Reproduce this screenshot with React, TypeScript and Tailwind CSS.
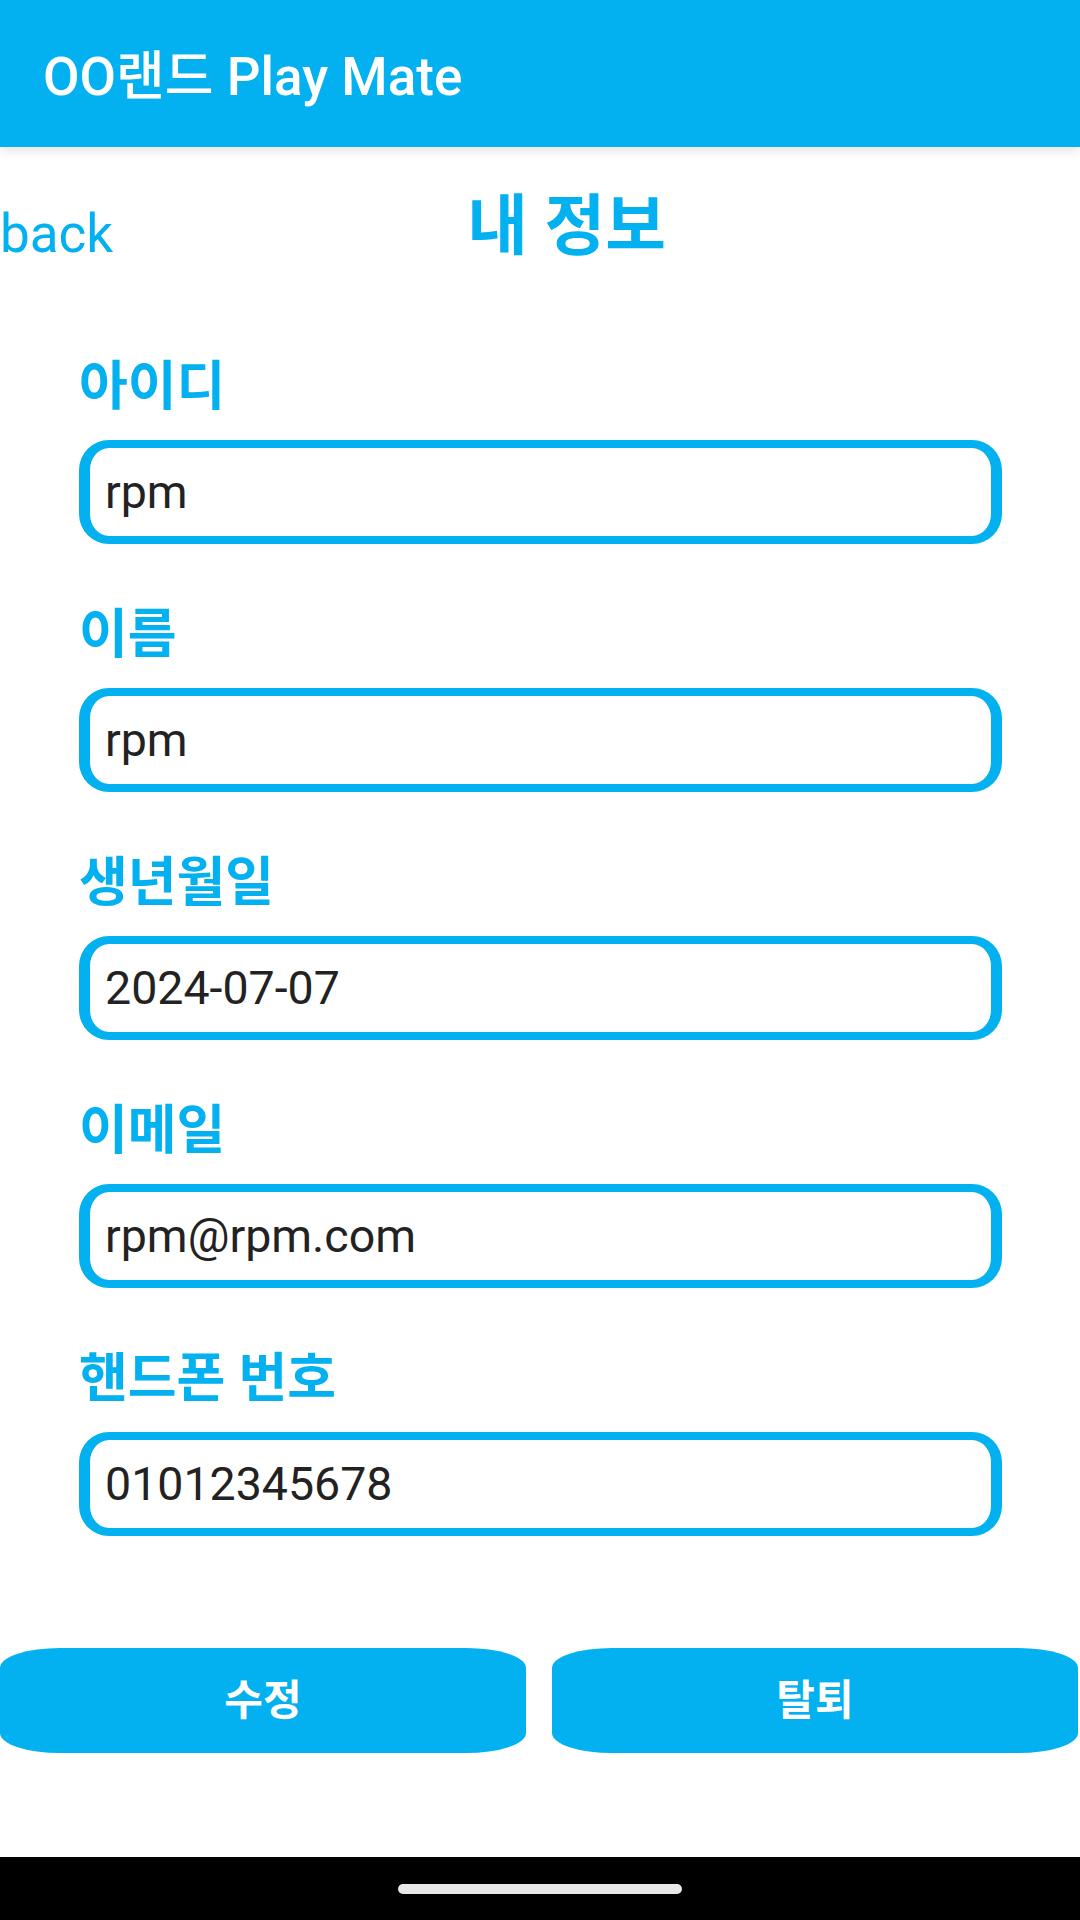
import React from "react";

const fields = [
  { label: "아이디", value: "rpm" },
  { label: "이름", value: "rpm" },
  { label: "생년월일", value: "2024-07-07" },
  { label: "이메일", value: "rpm@rpm.com" },
  { label: "핸드폰 번호", value: "01012345678" },
];

export default function App() {
  return (
    <div className="min-h-screen w-[1080px] bg-white flex flex-col font-['Roboto','Noto_Sans_CJK_KR',sans-serif]">
      {/* app bar */}
      <div className="h-[147px] bg-[#03b0f0] flex items-center px-[43px] pt-[8px] shadow-[0_4px_10px_rgba(0,0,0,0.10)] relative z-10">
        <h1 className="text-white text-[53px] font-medium leading-none">OO랜드 Play Mate</h1>
      </div>

      <div className="flex items-center mt-[45px] pr-[60px]">
        <span className="text-[#03b0f0] text-[53px] leading-none pt-[16px]">back</span>
        <h2 className="flex-1 text-center text-[#03b0f0] text-[66px] font-bold leading-none">내 정보</h2>
      </div>

      <div className="flex flex-col gap-[65px] px-[78px] pl-[79px] mt-[100px]">
        {fields.map((f) => (
          <div key={f.label} className="flex flex-col">
            <label className="text-[#03b0f0] text-[53px] font-bold leading-none">{f.label}</label>
            <div className="mt-[26px] h-[104px] border-x-[11px] border-y-[8px] border-[#03b0f0] rounded-[30px] flex items-center pl-[15px]">
              <span className="text-[#222222] text-[46.5px] leading-none">{f.value}</span>
            </div>
          </div>
        ))}
      </div>

      <div className="flex gap-[26px] mt-[112px] pr-[2px]">
        <button className="flex-1 h-[105px] bg-[#03b0f0] rounded-[60px/20px] text-white text-[42px] font-bold">
          수정
        </button>
        <button className="flex-1 h-[105px] bg-[#03b0f0] rounded-[60px/20px] text-white text-[42px] font-bold">
          탈퇴
        </button>
      </div>

      <div className="flex-1" />

      {/* system nav bar */}
      <div className="h-[63px] bg-black flex items-center justify-center">
        <div className="w-[284px] h-[10px] rounded-full bg-[#e8e8e8]" />
      </div>
    </div>
  );
}
